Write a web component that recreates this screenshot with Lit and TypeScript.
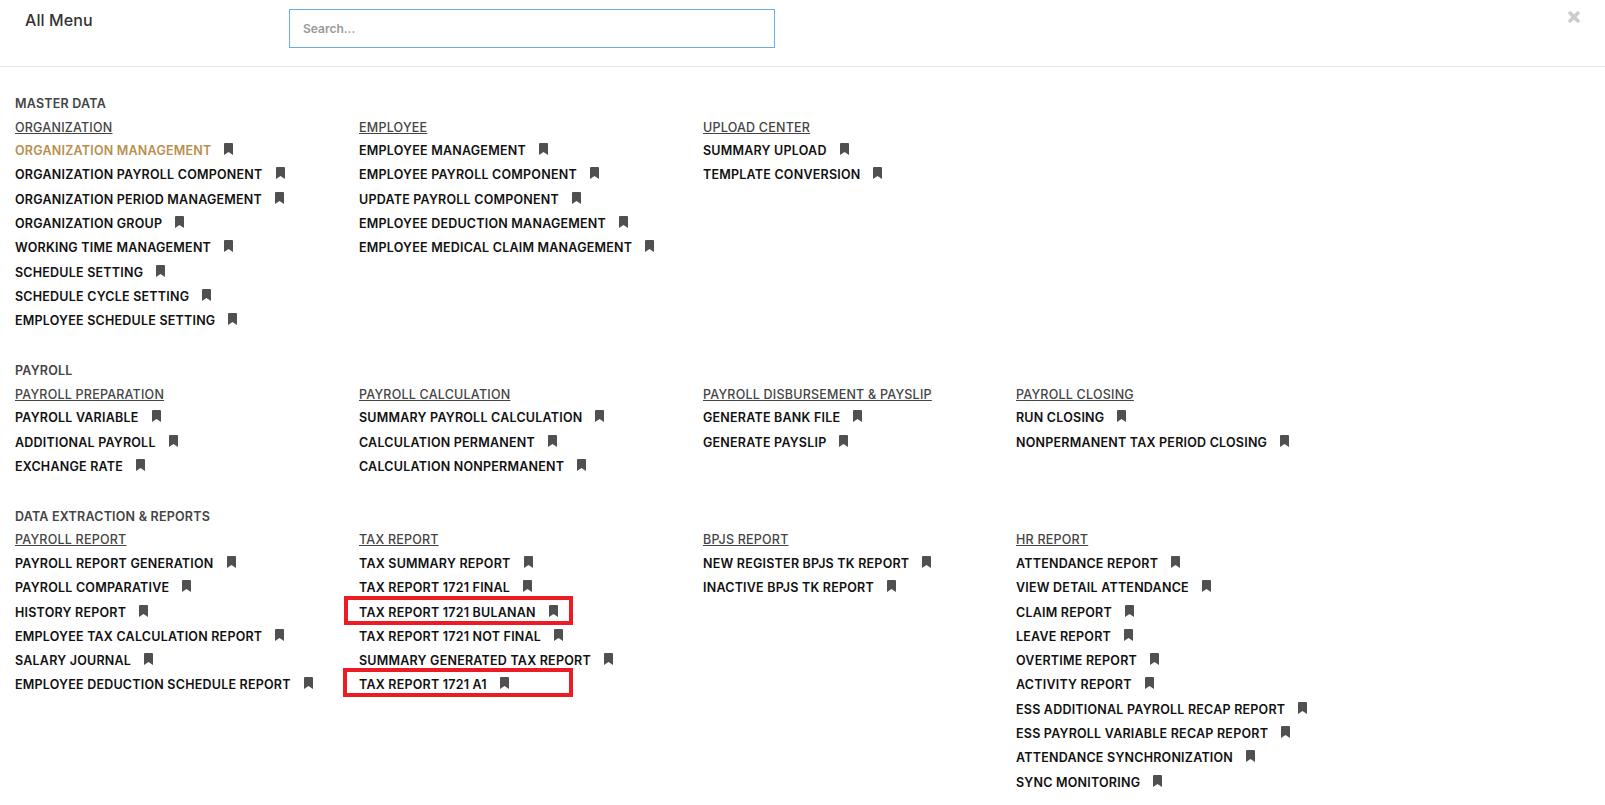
import { LitElement, html, css } from "lit";
import { customElement } from "lit/decorators.js";

type Group = { title: string; items: string[] };
type Section = { title: string; groups: Group[] };

const sections: Section[] = [
  {
    title: "MASTER DATA",
    groups: [
      { title: "ORGANIZATION", items: ["ORGANIZATION MANAGEMENT", "ORGANIZATION PAYROLL COMPONENT", "ORGANIZATION PERIOD MANAGEMENT", "ORGANIZATION GROUP", "WORKING TIME MANAGEMENT", "SCHEDULE SETTING", "SCHEDULE CYCLE SETTING", "EMPLOYEE SCHEDULE SETTING"] },
      { title: "EMPLOYEE", items: ["EMPLOYEE MANAGEMENT", "EMPLOYEE PAYROLL COMPONENT", "UPDATE PAYROLL COMPONENT", "EMPLOYEE DEDUCTION MANAGEMENT", "EMPLOYEE MEDICAL CLAIM MANAGEMENT"] },
      { title: "UPLOAD CENTER", items: ["SUMMARY UPLOAD", "TEMPLATE CONVERSION"] },
    ],
  },
  {
    title: "PAYROLL",
    groups: [
      { title: "PAYROLL PREPARATION", items: ["PAYROLL VARIABLE", "ADDITIONAL PAYROLL", "EXCHANGE RATE"] },
      { title: "PAYROLL CALCULATION", items: ["SUMMARY PAYROLL CALCULATION", "CALCULATION PERMANENT", "CALCULATION NONPERMANENT"] },
      { title: "PAYROLL DISBURSEMENT & PAYSLIP", items: ["GENERATE BANK FILE", "GENERATE PAYSLIP"] },
      { title: "PAYROLL CLOSING", items: ["RUN CLOSING", "NONPERMANENT TAX PERIOD CLOSING"] },
    ],
  },
  {
    title: "DATA EXTRACTION & REPORTS",
    groups: [
      { title: "PAYROLL REPORT", items: ["PAYROLL REPORT GENERATION", "PAYROLL COMPARATIVE", "HISTORY REPORT", "EMPLOYEE TAX CALCULATION REPORT", "SALARY JOURNAL", "EMPLOYEE DEDUCTION SCHEDULE REPORT"] },
      { title: "TAX REPORT", items: ["TAX SUMMARY REPORT", "TAX REPORT 1721 FINAL", "TAX REPORT 1721 BULANAN", "TAX REPORT 1721 NOT FINAL", "SUMMARY GENERATED TAX REPORT", "TAX REPORT 1721 A1"] },
      { title: "BPJS REPORT", items: ["NEW REGISTER BPJS TK REPORT", "INACTIVE BPJS TK REPORT"] },
      { title: "HR REPORT", items: ["ATTENDANCE REPORT", "VIEW DETAIL ATTENDANCE", "CLAIM REPORT", "LEAVE REPORT", "OVERTIME REPORT", "ACTIVITY REPORT", "ESS ADDITIONAL PAYROLL RECAP REPORT", "ESS PAYROLL VARIABLE RECAP REPORT", "ATTENDANCE SYNCHRONIZATION", "SYNC MONITORING"] },
    ],
  },
];

const marks: Record<string, string> = {
  "TAX REPORT 1721 BULANAN": "mark first",
  "TAX REPORT 1721 A1": "mark second",
};

@customElement("app-root")
export class AppRoot extends LitElement {
  static styles = css`
    :host {
      display: block;
      height: 805px;
      overflow: hidden;
      background: #fff;
      font-family: "Inter", "Liberation Sans", sans-serif;
    }
    .header {
      display: flex;
      align-items: flex-start;
      box-sizing: border-box;
      height: 67px;
      border-bottom: 1px solid #e5e5e5;
    }
    .title {
      width: 289px;
      padding: 10px 0 0 25px;
      box-sizing: border-box;
      font-size: 16px;
      line-height: 20px;
      font-weight: 500;
      color: #333;
      letter-spacing: 0.1px;
    }
    .search {
      width: 486px;
      height: 39px;
      margin-top: 9px;
      box-sizing: border-box;
      border: 1px solid #66afe9;
      padding: 0 13px;
      font: 600 12px "Inter", sans-serif;
      color: #333;
      outline: none;
      background: #fff;
    }
    .search::placeholder { color: #999; opacity: 1; }
    .close {
      margin: 10px 24px 0 auto;
      width: 14px;
      height: 14px;
      display: block;
    }
    .body { padding: 27px 0 0 15px; }
    section { margin-bottom: 28.3px; }
    h2 {
      margin: 0;
      font-size: 12.5px;
      line-height: 20px;
      font-weight: 600;
      color: #444;
      letter-spacing: 0.22px;
    }
    .cols {
      display: grid;
      grid-template-columns: 344px 344px 313px 1fr;
    }
    .group-title {
      display: inline-block;
      margin-top: 3.5px;
      font-size: 12.5px;
      line-height: 20px;
      font-weight: 500;
      color: #444;
      text-decoration: underline;
      letter-spacing: 0.22px;
    }
    ul { list-style: none; margin: 1px 0 0; padding: 0; }
    li {
      position: relative;
      display: flex;
      align-items: center;
      height: 24.3px;
      font-size: 12.5px;
      font-weight: 600;
      color: #111;
      white-space: nowrap;
      letter-spacing: 0.22px;
    }
    li.active { color: #b98f4e; }
    li svg { width: 9px; height: 12px; margin: -3px 0 0 13px; fill: #505050; flex: none; }
    .mark {
      position: absolute;
      box-sizing: border-box;
      height: 29px;
      border: 4px solid #ed1c24;
    }
    .mark.first { left: -15px; top: -4px; width: 229px; }
    .mark.second { left: -16px; top: -5px; width: 230px; }
  `;

  private bookmark() {
    return html`<svg viewBox="0 0 9 12" aria-hidden="true"><path d="M1 0h7a1 1 0 0 1 1 1v11L4.5 9 0 12V1a1 1 0 0 1 1-1z"/></svg>`;
  }

  render() {
    return html`
      <div class="header">
        <div class="title">All Menu</div>
        <input class="search" placeholder="Search..." />
        <svg class="close" viewBox="0 0 14 14" aria-hidden="true"><path d="M2 2l10 10M12 2L2 12" stroke="#ccc" stroke-width="3.6"/></svg>
      </div>
      <div class="body">
        ${sections.map(
          (s) => html`<section>
            <h2>${s.title}</h2>
            <div class="cols">
              ${s.groups.map(
                (g) => html`<div>
                  <span class="group-title">${g.title}</span>
                  <ul>
                    ${g.items.map(
                      (i) => html`<li class=${i === "ORGANIZATION MANAGEMENT" ? "active" : ""}>
                        ${i}${this.bookmark()}
                        ${marks[i] ? html`<span class=${marks[i]}></span>` : ""}
                      </li>`
                    )}
                  </ul>
                </div>`
              )}
            </div>
          </section>`
        )}
      </div>
    `;
  }
}
